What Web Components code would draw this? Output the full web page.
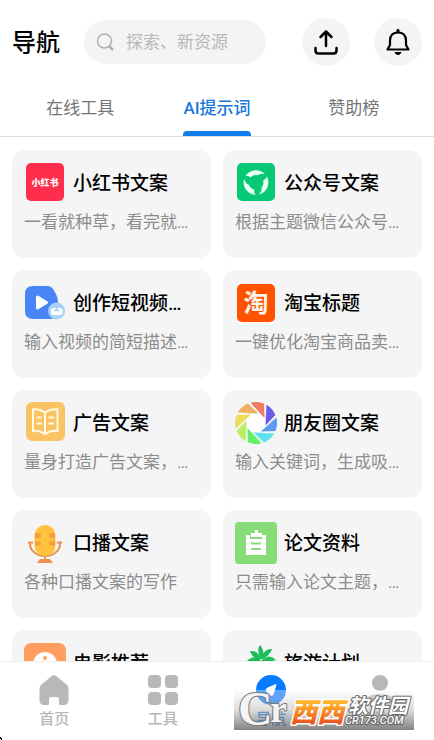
<!DOCTYPE html>
<html lang="zh-CN">
<head>
<meta charset="utf-8">
<meta name="viewport" content="width=device-width, initial-scale=1">
<title>导航</title>
<style>
    html, body {
        margin: 0;
        height: 100%;
    }
    body {
        font-family: Roboto, "Noto Sans CJK SC", sans-serif;
        background: #fff;
        color: #000;
    }
</style>
</head>
<body>
<nav-app>
    <app-header slot="header" heading="导航" hint="探索、新资源"></app-header>

    <tab-bar slot="tabs">
        <tab-item>在线工具</tab-item>
        <tab-item active>AI提示词</tab-item>
        <tab-item>赞助榜</tab-item>
    </tab-bar>

    <prompt-card heading="小红书文案">
        <svg slot="icon" viewBox="0 0 42 42">
            <rect x="2" y="1" width="38" height="38" rx="5" fill="#ff2e4d"/>
            <text x="21" y="24" font-size="9" font-weight="900" text-anchor="middle" fill="#fff">小红书</text>
        </svg>
        一看就种草，看完就想要的文案
    </prompt-card>
    <prompt-card heading="公众号文案">
        <svg slot="icon" viewBox="0 0 42 42">
            <rect x="2" y="1" width="38" height="38" rx="5" fill="#07c975"/>
            <g fill="#e9fff5" transform="translate(21 20.500)">
                <path d="M-10.700 -6.200A12.400 12.400 0 0 1 9 -8.500Q4 -9.500 1.500 -7.300A7.500 7.500 0 0 0 -5.500 -5Q-8 -7.500 -10.700 -6.200z"/>
                <path transform="rotate(120)" d="M-10.700 -6.200A12.400 12.400 0 0 1 9 -8.500Q4 -9.500 1.500 -7.300A7.500 7.500 0 0 0 -5.500 -5Q-8 -7.500 -10.700 -6.200z"/>
                <path transform="rotate(240)" d="M-10.700 -6.200A12.400 12.400 0 0 1 9 -8.500Q4 -9.500 1.500 -7.300A7.500 7.500 0 0 0 -5.500 -5Q-8 -7.500 -10.700 -6.200z"/>
            </g>
        </svg>
        根据主题微信公众号文章内容
    </prompt-card>
    <prompt-card heading="创作短视频文案">
        <svg slot="icon" viewBox="0 0 42 42">
            <path d="M9 4h14q4 0 6 3l3 5q2 4 2 8v9q0 8-8 8H9q-8 0-8-8V12q0-8 8-8z" fill="#4a85f7"/>
            <path d="M13.500 15v11l9-5.500z" fill="#fff" stroke="#fff" stroke-width="3" stroke-linejoin="round"/>
            <circle cx="32.500" cy="29" r="8.500" fill="#a6d0f6"/>
            <rect x="27" y="26" width="11.500" height="7" rx="2" fill="#fff"/>
            <path d="M32.700 24v4.500M30 28.500h5.500" stroke="#a6d0f6" stroke-width="1.500"/>
        </svg>
        输入视频的简短描述，生成文案
    </prompt-card>
    <prompt-card heading="淘宝标题">
        <svg slot="icon" viewBox="0 0 42 42">
            <rect x="2" y="2" width="38" height="38" rx="5" fill="#ff5200"/>
            <text x="21" y="30" font-size="25" font-weight="700" text-anchor="middle" fill="#fff4e8">淘</text>
        </svg>
        一键优化淘宝商品卖点和标题
    </prompt-card>
    <prompt-card heading="广告文案">
        <svg slot="icon" viewBox="0 0 42 42">
            <rect x="2" width="39" height="39" rx="6" fill="#fac364"/>
            <g fill="none" stroke="#fffbe6" stroke-width="2">
                <path d="M21 10.500Q15 6.500 9 7.500v21.500Q15 28 21 32Q27 28 33.500 29V7.500Q27 6.500 21 10.500zM21 10.500V32"/>
                <path d="M12.500 15.500h5.500M12.500 21.500h5.500M24.500 15.500H30M24.500 21.500H30"/>
            </g>
        </svg>
        量身打造广告文案，吸引更多客户
    </prompt-card>
    <prompt-card heading="朋友圈文案">
        <svg slot="icon" viewBox="0 0 42 42">
            <circle cx="21" cy="21" r="10" fill="#fff"/>
            <g transform="translate(21 21)">
                <path fill="#6b5be6" d="M10.500 -18.200A21 21 0 0 1 19.400 -8L9.500 2.500z"/>
                <path fill="#5c9af0" transform="rotate(45)" d="M10.500 -18.200A21 21 0 0 1 19.400 -8L9.500 2.500z"/>
                <path fill="#5de2ec" transform="rotate(90)" d="M10.500 -18.200A21 21 0 0 1 19.400 -8L9.500 2.500z"/>
                <path fill="#61f065" transform="rotate(135)" d="M10.500 -18.200A21 21 0 0 1 19.400 -8L9.500 2.500z"/>
                <path fill="#b9f060" transform="rotate(180)" d="M10.500 -18.200A21 21 0 0 1 19.400 -8L9.500 2.500z"/>
                <path fill="#eddd5d" transform="rotate(225)" d="M10.500 -18.200A21 21 0 0 1 19.400 -8L9.500 2.500z"/>
                <path fill="#efb164" transform="rotate(270)" d="M10.500 -18.200A21 21 0 0 1 19.400 -8L9.500 2.500z"/>
                <path fill="#ef7b61" transform="rotate(315)" d="M10.500 -18.200A21 21 0 0 1 19.400 -8L9.500 2.500z"/>
            </g>
        </svg>
        输入关键词，生成吸引人的文案
    </prompt-card>
    <prompt-card heading="口播文案">
        <svg slot="icon" viewBox="0 0 42 42">
            <path d="M6 20.500v1.500a15 12 0 0 0 30 0v-1.500M4 20.500h5M33 20.500h5M21 33v6" fill="none" stroke="#eb8f52" stroke-width="2"/>
            <rect x="10.500" y="3" width="21" height="31" rx="10.500" fill="#fec33b"/>
            <g fill="#f2a03f">
                <path d="M11 11h4q2 0 2 2.500t-2 2.500h-4zM31 11h-4q-2 0-2 2.500t2 2.500h4zM11 19.500h4q2 0 2 2t-2 2h-4zM31 19.500h-4q-2 0-2 2t2 2h4z"/>
            </g>
            <path d="M16 37h10l3 4H13z" fill="#eb8f52"/>
        </svg>
        各种口播文案的写作
    </prompt-card>
    <prompt-card heading="论文资料">
        <svg slot="icon" viewBox="0 0 42 42">
            <rect width="42" height="42" rx="4" fill="#86dc76"/>
            <path d="M11 13h4v4h12v-4h4v20H11z" fill="#fff"/>
            <path d="M16 11h4V8h3v3h4v4H16z" fill="#fff"/>
            <path d="M16 21.500h10M16 27h10" stroke="#86dc76" stroke-width="2"/>
        </svg>
        只需输入论文主题，即可生成
    </prompt-card>
    <prompt-card heading="电影推荐">
        <svg slot="icon" viewBox="0 0 42 42">
            <rect y="1" width="42" height="41" rx="7" fill="#ff9e5e"/>
            <circle cx="21" cy="22" r="12" fill="#fff"/>
            <g fill="#ff9e5e">
                <circle cx="21" cy="16" r="2"/><circle cx="15" cy="22" r="2"/>
                <circle cx="27" cy="22" r="2"/><circle cx="21" cy="28" r="2"/>
            </g>
        </svg>
        根据喜好推荐好看的电影
    </prompt-card>
    <prompt-card heading="旅游计划">
        <svg slot="icon" viewBox="0 0 42 42">
            <path d="M27 18q-3 10-4 22h5q-2-12 1-22z" fill="#6b4630"/>
            <g fill="#19bd59">
                <path d="M26 17Q21 8 25 3q5 6 3 13z"/>
                <path d="M26 17Q29 6 37 7q-2 6-9 10z"/>
                <path d="M26 17Q23 8 15 9q2 6 9 9z"/>
                <path d="M26 18Q19 12 12 19q6 1 13 0z"/>
                <path d="M27 18Q34 11 41 18q-6 2-13 1z"/>
            </g>
        </svg>
        输入目的地，生成旅游计划
    </prompt-card>

    <dock-bar slot="dock">
        <dock-item label="首页">
            <svg viewBox="0 0 30 30"><path d="M12.500 1.200q2.500-2 5 0l10 8.300q2 1.500 2 4V25q0 5-5 5h-3q-1.500 0-1.500-1.500V24q0-2-2-2h-6q-2 0-2 2v4.500Q10 30 8.500 30h-3q-5 0-5-5V13.500q0-2.500 2-4z"/></svg>
        </dock-item>
        <dock-item label="工具">
            <svg viewBox="0 0 30 30"><rect width="13" height="13" rx="4"/><rect x="17" width="13" height="13" rx="4"/><rect y="17" width="13" height="13" rx="4"/><rect x="17" y="17" width="13" height="13" rx="4"/></svg>
        </dock-item>
        <dock-item label="导航" active>
            <svg viewBox="0 0 30 30"><circle cx="15" cy="15" r="15"/><path d="M20 9.500l-2.500 9q-1 3-3 1.500l-4-4q-1-2 1-3z" fill="#fff" stroke="#fff" stroke-linejoin="round"/></svg>
        </dock-item>
        <dock-item label="我的">
            <svg viewBox="0 0 30 30"><circle cx="15" cy="8" r="8"/><ellipse cx="15" cy="24.500" rx="13" ry="5.500"/></svg>
        </dock-item>
    </dock-bar>

    <site-mark slot="mark"></site-mark>
</nav-app>

<script>
// attach an open shadow root with the given markup
function render(el, html) {
    const template = document.createElement('template');
    template.innerHTML = html;
    el.attachShadow({ mode: 'open' });
    el.shadowRoot.appendChild(template.content.cloneNode(true));
}

// <nav-app> page frame: header, tabs, scrolling cards, dock
class NavApp extends HTMLElement {
    constructor() {
        super();
        render(this, `
            <style>
                :host {
                    display: flex;
                    flex-direction: column;
                    position: relative;
                    height: 100vh;
                    overflow: hidden;
                }
                main {
                    flex: 1;
                    min-height: 0;
                    overflow-y: auto;
                    scrollbar-width: none;
                }
                .cards {
                    display: grid;
                    grid-template-columns: repeat(2, minmax(0, 1fr));
                    gap: 12px;
                    padding: 13px 12px;
                }
                .corner {
                    position: absolute;
                    left: 0;
                    bottom: 0;
                    width: 2px;
                    height: 3px;
                }
            </style>
            <slot name="header"></slot>
            <slot name="tabs"></slot>
            <main><div class="cards"><slot></slot></div></main>
            <slot name="dock"></slot>
            <slot name="mark"></slot>
            <svg class="corner" viewBox="0 0 2 3"><path d="M0 0h1v1h1v2H1V2H0z"/></svg>
        `);
    }
}

// <app-header> heading, search box and the two round buttons
class AppHeader extends HTMLElement {
    constructor() {
        super();
        render(this, `
            <style>
                :host {
                    display: flex;
                    align-items: center;
                    gap: 24px;
                    padding: 18px 12px;
                }
                h1 {
                    margin: 0;
                    padding-top: 2px;
                    font-size: 24px;
                    line-height: 32px;
                    font-weight: 500;
                }
                .search {
                    flex: 1;
                    min-width: 0;
                    display: flex;
                    align-items: center;
                    gap: 12px;
                    height: 44px;
                    box-sizing: border-box;
                    padding: 0 12px;
                    margin-right: 12px;
                    border-radius: 22px;
                    background: #f4f4f4;
                }
                .search svg {
                    flex: none;
                    width: 18px;
                    height: 18px;
                }
                input {
                    flex: 1;
                    min-width: 0;
                    padding: 0;
                    border: 0;
                    outline: 0;
                    background: none;
                    font: inherit;
                    font-size: 17px;
                    line-height: 24px;
                }
                input::placeholder {
                    color: #b8b8b8;
                }
                button {
                    flex: none;
                    display: grid;
                    place-items: center;
                    width: 48px;
                    height: 48px;
                    padding: 0;
                    border: 0;
                    border-radius: 50%;
                    background: #f4f4f4;
                    cursor: pointer;
                }
                button svg {
                    width: 26px;
                    height: 26px;
                }
            </style>
            <h1></h1>
            <label class="search">
                <svg viewBox="0 0 18 18" fill="none" stroke="#b0b0b0"><circle cx="8.500" cy="8" r="7" stroke-width="1.500"/><path d="M13 13l4 4" stroke-width="2.500"/></svg>
                <input type="text" aria-label="搜索">
            </label>
            <button type="button" aria-label="上传">
                <svg viewBox="0 0 26 26" fill="none" stroke="#000" stroke-width="2.500" stroke-linecap="round" stroke-linejoin="round"><path d="M13 17V3M7.500 8L13 2.500 18.500 8M2.500 19v2.500q0 3 3 3h15q3 0 3-3V19"/></svg>
            </button>
            <button type="button" aria-label="通知">
                <svg viewBox="0 0 26 26"><path d="M13 3.500c-5 0-8 3-8 8V16l-2.500 4.500h21L21 16v-4.500c0-5-3-8-8-8z" fill="none" stroke="#000" stroke-width="2.200" stroke-linejoin="round"/><path d="M11.500 3V1q0-1 1.500-1t1.500 1v2zM9.500 23h7q-1 3-3.500 3t-3.500-3z"/></svg>
            </button>
        `);
        this.shadowRoot.querySelector('h1').textContent = this.getAttribute('heading');
        this.shadowRoot.querySelector('input').placeholder = this.getAttribute('hint');
    }
}

// <tab-bar> equal columns over a hairline
class TabBar extends HTMLElement {
    constructor() {
        super();
        render(this, `
            <style>
                :host {
                    display: grid;
                    grid-auto-flow: column;
                    grid-auto-columns: 1fr;
                    padding: 0 12px;
                    border-bottom: 1px solid #dcdcdc;
                }
            </style>
            <slot></slot>
        `);
    }
}

class TabItem extends HTMLElement {
    constructor() {
        super();
        render(this, `
            <style>
                :host {
                    display: flex;
                    justify-content: center;
                }
                button {
                    display: flex;
                    flex-direction: column;
                    padding: 12px 0 0;
                    border: 0;
                    background: none;
                    color: #757575;
                    font: inherit;
                    font-size: 17px;
                    line-height: 24px;
                    cursor: pointer;
                }
                button::after {
                    content: "";
                    height: 5px;
                    margin-top: 11px;
                    border-radius: 4px 4px 0 0;
                }
                :host([active]) button {
                    color: #1677dd;
                    font-weight: 500;
                }
                :host([active]) button::after {
                    background: #0f7bec;
                }
            </style>
            <button type="button"><slot></slot></button>
        `);
    }
}

// <prompt-card> icon slot, heading and one line of description
class PromptCard extends HTMLElement {
    constructor() {
        super();
        render(this, `
            <style>
                :host {
                    display: block;
                    min-width: 0;
                }
                a {
                    display: block;
                    padding: 12px 12px 25px;
                    border-radius: 13px;
                    background: #f5f5f5;
                    color: inherit;
                    text-decoration: none;
                }
                .top {
                    display: flex;
                    align-items: center;
                    gap: 7px;
                }
                ::slotted(svg) {
                    flex: none;
                    width: 42px;
                    height: 42px;
                }
                h2, p {
                    margin: 0;
                    overflow: hidden;
                    white-space: nowrap;
                    text-overflow: ellipsis;
                }
                h2 {
                    min-width: 0;
                    padding-top: 2px;
                    font-size: 19px;
                    line-height: 28px;
                    font-weight: 500;
                }
                p {
                    margin-top: 7px;
                    color: #8c8c8c;
                    font-size: 17px;
                    line-height: 22px;
                }
            </style>
            <a href="#">
                <div class="top"><slot name="icon"></slot><h2></h2></div>
                <p><slot></slot></p>
            </a>
        `);
        this.shadowRoot.querySelector('h2').textContent = this.getAttribute('heading');
    }
}

// <dock-bar> bottom navigation
class DockBar extends HTMLElement {
    constructor() {
        super();
        render(this, `
            <style>
                :host {
                    display: block;
                    border-top: 1px solid #eee;
                    background: #fff;
                }
                nav {
                    display: grid;
                    grid-auto-flow: column;
                    grid-auto-columns: 1fr;
                    padding: 13px 0 11px;
                }
            </style>
            <nav><slot></slot></nav>
        `);
    }
}

class DockItem extends HTMLElement {
    constructor() {
        super();
        render(this, `
            <style>
                :host {
                    display: block;
                }
                a {
                    display: flex;
                    flex-direction: column;
                    align-items: center;
                    gap: 4px;
                    color: #b8b8b8;
                    fill: currentColor;
                    font-size: 15px;
                    line-height: 20px;
                    font-weight: 500;
                    text-decoration: none;
                }
                :host([active]) a {
                    color: #087bff;
                }
                ::slotted(svg) {
                    display: block;
                    width: 30px;
                    height: 30px;
                }
            </style>
            <a href="#"><slot></slot><span></span></a>
        `);
        this.shadowRoot.querySelector('span').textContent = this.getAttribute('label');
    }
}

// <site-mark> download site badge lying over the dock
class SiteMark extends HTMLElement {
    constructor() {
        super();
        render(this, `
            <style>
                :host {
                    position: absolute;
                    right: 20px;
                    bottom: 10px;
                    width: 180px;
                    height: 40px;
                    pointer-events: none;
                    background: linear-gradient(rgba(255, 255, 255, .35), rgba(185, 185, 185, .5) 50%, rgba(100, 100, 100, .8));
                }
                svg {
                    display: block;
                    width: 100%;
                    height: 100%;
                }
                text {
                    paint-order: stroke;
                    stroke-linejoin: round;
                }
                .logo {
                    font-family: "Liberation Serif", serif;
                    font-weight: 700;
                    fill: #f4f4f4;
                    stroke: #777;
                    stroke-width: 2px;
                }
                .name {
                    font-size: 27px;
                    font-weight: 900;
                    font-style: italic;
                    fill: url(#warm);
                    stroke: #fff;
                    stroke-width: 3px;
                }
                .kind {
                    font-size: 20px;
                    font-weight: 700;
                    font-style: italic;
                    fill: #fff;
                    stroke: #666;
                    stroke-width: 2px;
                }
                .url {
                    font-size: 11px;
                    font-weight: 500;
                    font-style: italic;
                    fill: #fff;
                    stroke: #666;
                    stroke-width: 2px;
                }
            </style>
            <svg viewBox="0 0 180 40">
                <defs>
                    <linearGradient id="warm" x1="0" y1="0" x2="0" y2="1">
                        <stop offset=".2" stop-color="#ffb42e"/>
                        <stop offset=".9" stop-color="#e5481c"/>
                    </linearGradient>
                </defs>
                <text class="logo" x="4" y="35" font-size="48">C</text>
                <text class="logo" x="36" y="32" font-size="38">r</text>
                <text class="name" x="56" y="32">西西</text>
                <text class="kind" x="114" y="23">软件园</text>
                <text class="url" x="111" y="34">CR173.COM</text>
            </svg>
        `);
    }
}

customElements.define('nav-app', NavApp);
customElements.define('app-header', AppHeader);
customElements.define('tab-bar', TabBar);
customElements.define('tab-item', TabItem);
customElements.define('prompt-card', PromptCard);
customElements.define('dock-bar', DockBar);
customElements.define('dock-item', DockItem);
customElements.define('site-mark', SiteMark);
</script>
</body>
</html>
